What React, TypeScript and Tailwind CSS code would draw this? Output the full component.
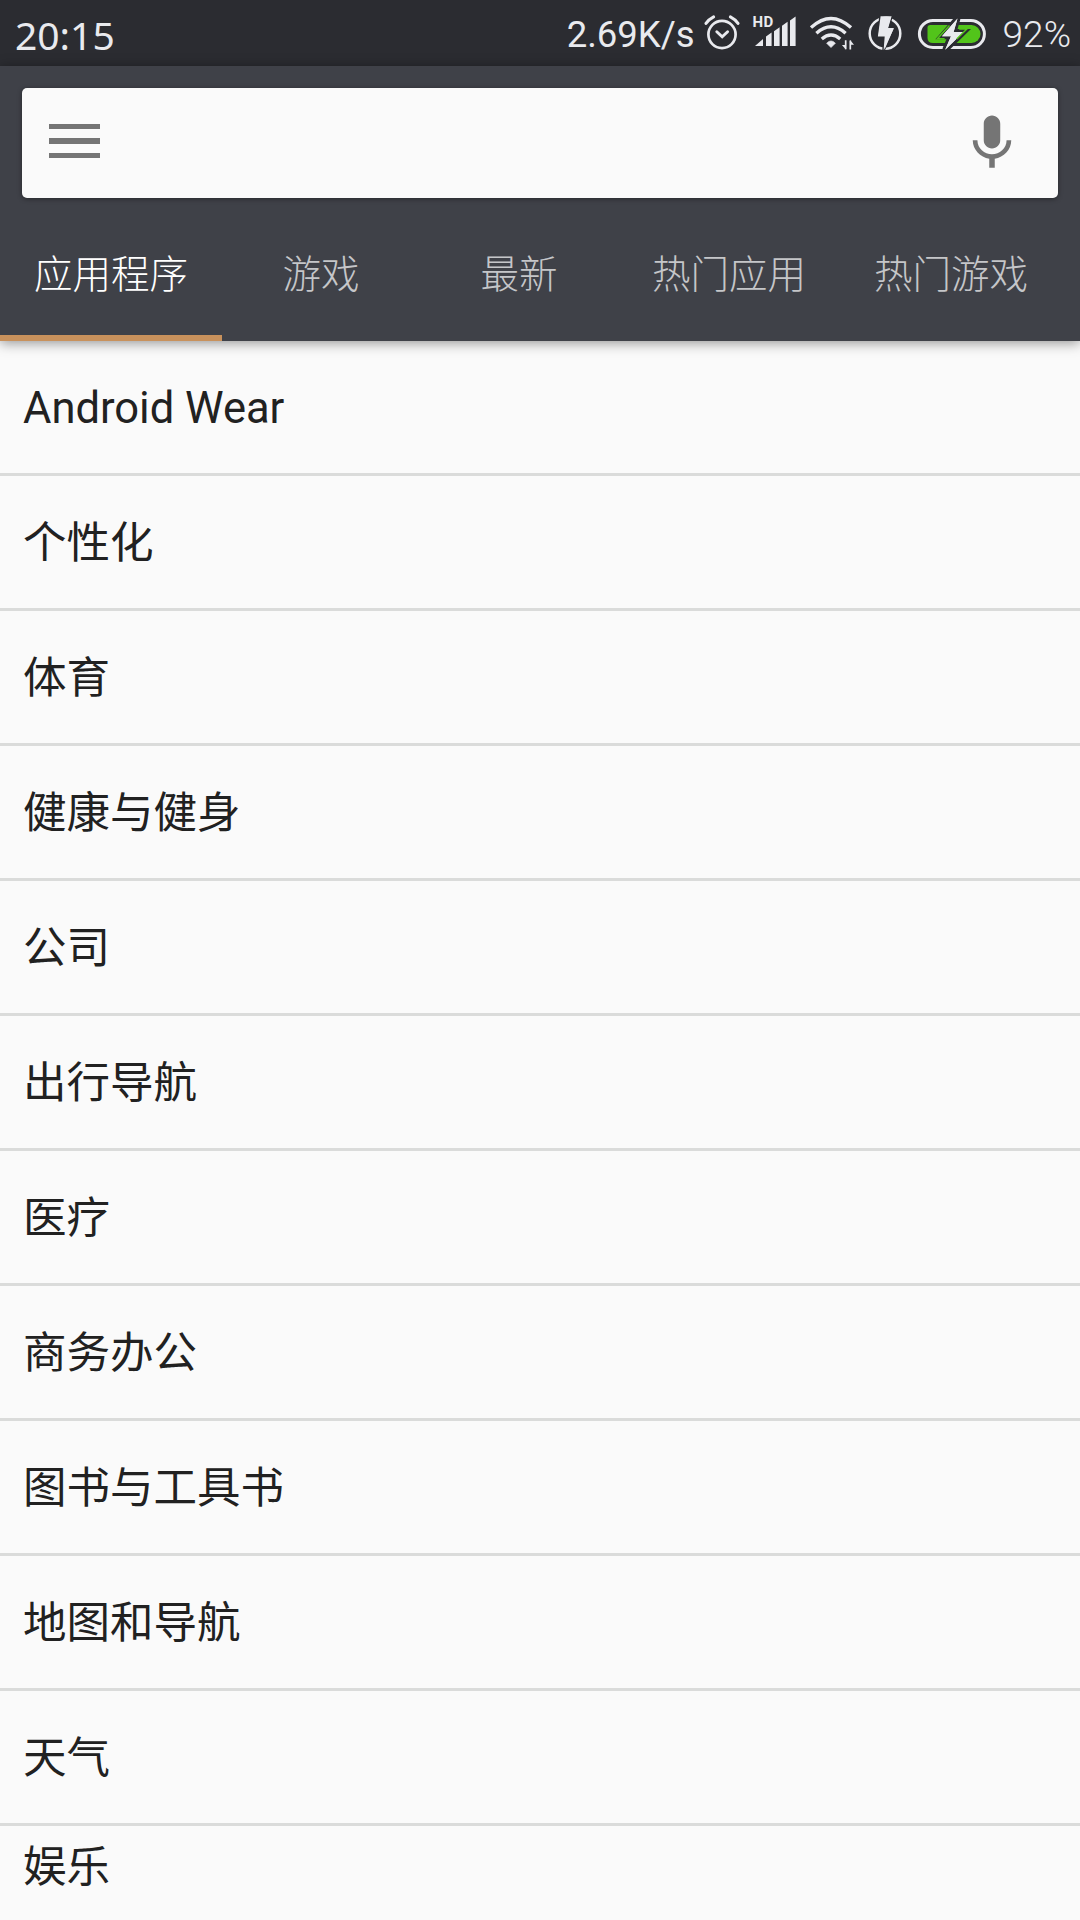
const tabs = [
  { label: '应用程序', width: 'w-[222px]', active: true },
  { label: '游戏', width: 'w-[198px]', active: false },
  { label: '最新', width: 'w-[198px]', active: false },
  { label: '热门应用', width: 'w-[222px]', active: false },
  { label: '热门游戏', width: 'w-[222px]', active: false },
];

const categories = [
  'Android Wear',
  '个性化',
  '体育',
  '健康与健身',
  '公司',
  '出行导航',
  '医疗',
  '商务办公',
  '图书与工具书',
  '地图和导航',
  '天气',
];

function AlarmIcon() {
  return (
    <svg className="ml-[9px] h-[36px] w-[36px] shrink-0" viewBox="0 0 36 36" fill="none" stroke="#e9eaee" strokeLinecap="round">
      <circle cx="18" cy="19.5" r="13.6" strokeWidth="2.7" />
      <path d="M12.8 16.8l5.4 5 5.4-5" strokeWidth="2.9" />
      <path d="M2 8.4q3-4.3 7.6-6.6M34 8.4q-3-4.3-7.6-6.6" strokeWidth="3" />
    </svg>
  );
}

function SignalIcon() {
  return (
    <div className="relative ml-[14px] h-[36px] w-[42px] shrink-0">
      <span className="absolute top-[-2px] left-[-1px] text-[15px] leading-[18px] font-bold tracking-[0.2px]">HD</span>
      <svg className="h-[36px] w-[42px]" viewBox="0 0 42 36" fill="#e9eaee">
        <path d="M1 31L9 24v7z" />
        <path d="M12 31V21.5l5.6-4V31zM20 31V16.2l5.6-4V31zM28 31V10.8l5.6-4V31zM36 31V5.4l5.6-4V31z" />
      </svg>
    </div>
  );
}

function WifiIcon() {
  return (
    <svg className="ml-[14px] h-[36px] w-[44px] shrink-0" viewBox="0 0 44 36" fill="none" stroke="#e9eaee">
      <path d="M1 12.6Q21 -5.6 41 12.6M6.4 18.2Q21 5.4 35.6 18.2M11.8 24Q21 16.2 30.2 24" strokeWidth="3.4" />
      <path d="M16.6 28.2Q21 23.6 25.4 28.2L21 32.6z" fill="#e9eaee" strokeWidth="0.6" />
      <path d="M35.7 25.2v9M40.3 34.4v-9" strokeWidth="1.7" />
      <path d="M35.9 34.6l-4-4.6h4zM40.1 25l4 4.8h-4z" fill="#e9eaee" stroke="none" />
    </svg>
  );
}

function BoltCircleIcon() {
  return (
    <svg className="ml-[13px] h-[36px] w-[36px] shrink-0" viewBox="0 0 36 36" fill="none">
      <circle cx="18" cy="18.5" r="15.3" stroke="#e9eaee" strokeWidth="2.5" />
      <path d="M13.6 1.2h11l-3.6 12.2h5.8L16.6 35.2l1.1-13.8h-6.8z" fill="#e9eaee" stroke="#2b2c31" strokeWidth="2.6" paintOrder="stroke" />
      <path d="M14.2 2.4Q19 .6 24 2.2L20.8 13h6L17.4 35l1-14H11.4z" fill="#e9eaee" />
    </svg>
  );
}

function BatteryIcon() {
  return (
    <svg className="ml-[14px] h-[36px] w-[70px] shrink-0" viewBox="0 0 70 36" fill="none">
      <rect x="2.4" y="5.4" width="65" height="27" rx="13.5" stroke="#e9eaee" strokeWidth="3" />
      <path d="M13.2 10H54.5a9 9 0 0 1 0 18H16Q10.5 28 10.5 23V12.7Q10.5 10 13.2 10z" fill="#52c41a" />
      <path d="M40.5 3.5L25 21.2h9L28.2 34.8 46.6 17H36.6z" fill="#e9eaee" stroke="#2b2c31" strokeWidth="6" paintOrder="stroke" />
      <path d="M40.5 3.5L25 21.2h9L28.2 34.8 46.6 17H36.6z" fill="#e9eaee" />
      <path d="M32.5 10.5L20.4 23.8h7.2M42.2 14h7.6L39.8 24" stroke="#52c41a" strokeWidth="1.5" />
    </svg>
  );
}

function StatusBar() {
  return (
    <div className="flex h-[66px] items-center bg-[#2b2c31] pr-[9px] pl-[15px] text-[#e9eaee]">
      <span className="mt-[3px] font-['Noto_Sans'] text-[39px] leading-none">20:15</span>
      <div className="ml-auto flex items-center font-['Roboto']">
        <span className="mt-[5px] text-[36.5px] leading-none">2.69K/s</span>
        <AlarmIcon />
        <SignalIcon />
        <WifiIcon />
        <BoltCircleIcon />
        <BatteryIcon />
        <span className="mt-[3px] ml-[16px] text-[37px] leading-none font-light">92%</span>
      </div>
    </div>
  );
}

function SearchBox() {
  return (
    <div className="mx-[22px] flex h-[110px] items-center justify-between rounded-[5px] bg-[#fafafa] pr-[33px] pl-[27px] shadow-[0_1px_5px_rgba(0,0,0,0.4)]">
      <div className="mt-[-4px] flex w-[51px] flex-col gap-[9px]">
        <div className="h-[5.5px] bg-[#757575]" />
        <div className="h-[5.5px] bg-[#757575]" />
        <div className="h-[5.5px] bg-[#757575]" />
      </div>
      <svg className="h-[66px] w-[66px]" viewBox="0 0 24 24" fill="#757575">
        <path d="M12 14c1.66 0 2.99-1.34 2.99-3L15 5c0-1.66-1.34-3-3-3S9 3.34 9 5v6c0 1.66 1.34 3 3 3zm5.3-3c0 3-2.54 5.1-5.3 5.1S6.7 14 6.7 11H5c0 3.41 2.72 6.23 6 6.72V21h2v-3.28c3.28-.48 6-3.3 6-6.72h-1.7z" />
      </svg>
    </div>
  );
}

export default function App() {
  return (
    <div className="flex h-[1920px] w-[1080px] flex-col overflow-hidden bg-[#fafafa] font-['Roboto','Noto_Sans_CJK_SC',sans-serif]">
      <StatusBar />
      <header className="relative flex h-[275px] shrink-0 flex-col bg-[#3f4148] pt-[22px] shadow-[0_2px_12px_rgba(0,0,0,0.42)]">
        <SearchBox />
        <nav className="flex flex-1">
          {tabs.map((tab) => (
            <div
              key={tab.label}
              className={`flex shrink-0 items-center justify-center border-b-6 pt-[18px] text-[38.5px] leading-none font-light ${tab.width} ${
                tab.active ? 'border-[#c8915c] text-white' : 'border-transparent text-[#c5c6c9]'
              }`}
            >
              {tab.label}
            </div>
          ))}
        </nav>
      </header>
      <ul className="text-[43.5px] leading-none text-[#212121]">
        {categories.map((name) => (
          <li key={name} className="flex h-[135px] items-center border-b-3 border-[#dadbda] pt-[3px] pl-[23px]">
            {name}
          </li>
        ))}
        <li className="flex h-[94px] items-start pt-[20px] pl-[23px]">娱乐</li>
      </ul>
    </div>
  );
}
